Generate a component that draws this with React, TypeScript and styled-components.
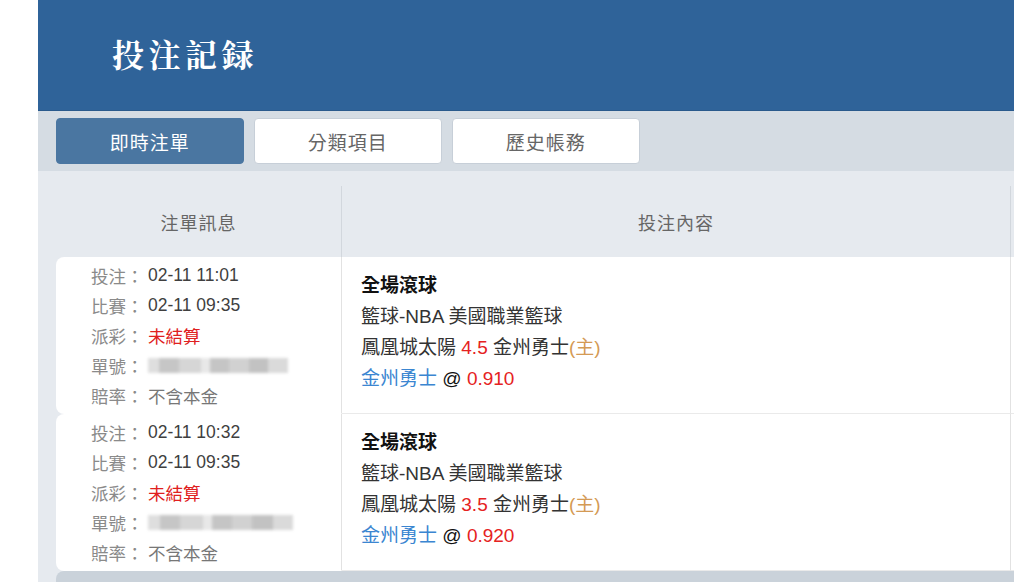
import styled, { createGlobalStyle } from "styled-components";

const GlobalStyle = createGlobalStyle`
  body {
    margin: 0;
    background: #ffffff;
    font-family: "Liberation Sans", "Noto Sans CJK TC", sans-serif;
    overflow: hidden;
  }
`;

const TABS = ["即時注單", "分類項目", "歷史帳務"];

const BETS = [
  {
    placed: "02-11 11:01",
    match: "02-11 09:35",
    line: "4.5",
    odds: "0.910",
    idWidth: 140,
  },
  {
    placed: "02-11 10:32",
    match: "02-11 09:35",
    line: "3.5",
    odds: "0.920",
    idWidth: 145,
  },
];

const App = () => {
  return (
    <>
      <GlobalStyle />
      <Page>
        <Main>
          <Header>
            <Title>投注記録</Title>
          </Header>
          <TabBar>
            {TABS.map((t, i) => (
              <Tab key={t} $active={i === 0}>
                {t}
              </Tab>
            ))}
          </TabBar>
          <TableArea>
            <HeadRow>
              <HeadCell>注單訊息</HeadCell>
              <HeadCell>投注內容</HeadCell>
              <HeadCell />
            </HeadRow>
            {BETS.map((b, i) => (
              <BetRow key={i}>
                <InfoCell>
                  <InfoLine>
                    <Label>投注：</Label>
                    <Value>{b.placed}</Value>
                  </InfoLine>
                  <InfoLine>
                    <Label>比賽：</Label>
                    <Value>{b.match}</Value>
                  </InfoLine>
                  <InfoLine>
                    <Label>派彩：</Label>
                    <Value $red>未結算</Value>
                  </InfoLine>
                  <InfoLine>
                    <Label>單號：</Label>
                    <Redacted style={{ width: b.idWidth }} />
                  </InfoLine>
                  <InfoLine>
                    <Label>賠率：</Label>
                    <Value $light>不含本金</Value>
                  </InfoLine>
                </InfoCell>
                <ContentCell>
                  <BetType>全場滾球</BetType>
                  <ContentLine>籃球-NBA 美國職業籃球</ContentLine>
                  <ContentLine>
                    鳳凰城太陽 <Red>{b.line}</Red> 金州勇士<Home>(主)</Home>
                  </ContentLine>
                  <ContentLine>
                    <Pick>金州勇士</Pick> <At>@</At> <Red>{b.odds}</Red>
                  </ContentLine>
                </ContentCell>
                <ExtraCell />
              </BetRow>
            ))}
            <FooterBar />
          </TableArea>
        </Main>
      </Page>
    </>
  );
};

export default App;

const Page = styled.div`
  width: 1014px;
  height: 582px;
  padding-left: 38px;
  box-sizing: border-box;
  display: flex;
`;

const Main = styled.div`
  flex: 1;
  display: flex;
  flex-direction: column;
  background: #e6eaef;
`;

const Header = styled.div`
  height: 111px;
  background: #2f6399;
  display: flex;
  align-items: center;
  padding-left: 74px;
  box-sizing: border-box;
  border-bottom: 1px solid #2a5a8c;
`;

const Title = styled.h1`
  margin: 0;
  color: #ffffff;
  font-family: "Noto Serif CJK TC", "Noto Sans CJK TC", serif;
  font-size: 32px;
  font-weight: 700;
  letter-spacing: 4.5px;
  padding-bottom: 4px;
`;

const TabBar = styled.div`
  height: 60px;
  background: #d5dce3;
  display: flex;
  align-items: center;
  gap: 10.5px;
  padding-left: 18px;
  box-sizing: border-box;
`;

const Tab = styled.button<{ $active?: boolean }>`
  width: 187.5px;
  height: 46px;
  border-radius: 4px;
  border: 1px solid ${(p) => (p.$active ? "#4a76a1" : "#c7cfd8")};
  background: ${(p) => (p.$active ? "#4a76a1" : "#ffffff")};
  color: ${(p) => (p.$active ? "#ffffff" : "#666666")};
  font-family: "Liberation Sans", "Noto Sans CJK TC", sans-serif;
  font-size: 19px;
  letter-spacing: 1px;
  padding: 0;
  box-sizing: border-box;
`;

const TableArea = styled.div`
  flex: 1;
  display: flex;
  flex-direction: column;
  padding: 15px 0 0 18px;
  box-sizing: border-box;
`;

const HeadRow = styled.div`
  display: grid;
  grid-template-columns: 286px 669px 1fr;
  height: 71px;
`;

const HeadCell = styled.div`
  display: flex;
  align-items: center;
  justify-content: center;
  color: #666666;
  font-size: 18px;
  letter-spacing: 1px;
  border-right: 1px solid #d2d7dd;
  &:last-child {
    border-right: none;
  }
`;

const BetRow = styled.div`
  display: grid;
  grid-template-columns: 286px 669px 1fr;
  height: 157px;
`;

const InfoCell = styled.div`
  background: #ffffff;
  border-radius: 8px 0 0 8px;
  border-right: 1px solid #e2e2e2;
  border-bottom: 1px solid transparent;
  padding-left: 35px;
  display: flex;
  flex-direction: column;
  justify-content: center;
  font-size: 17.5px;
`;

const InfoLine = styled.div`
  height: 30px;
  display: flex;
  align-items: center;
`;

const Label = styled.span`
  color: #8a8a8a;
  width: 57px;
  flex-shrink: 0;
`;

const Value = styled.span<{ $red?: boolean; $light?: boolean }>`
  color: ${(p) => (p.$red ? "#e02020" : p.$light ? "#777777" : "#3f3f3f")};
`;

const Redacted = styled.span`
  display: inline-block;
  height: 15px;
  background:
    linear-gradient(90deg, #d9d9d9 0 8%, #bdbdbd 8% 22%, #cfcfcf 22% 38%, #e4e4e4 38% 44%, #bcbcbc 44% 58%, #c9c9c9 58% 72%, #b8b8b8 72% 86%, #d4d4d4 86% 100%);
  filter: blur(1.5px);
  opacity: 0.85;
`;

const ContentCell = styled.div`
  background: #ffffff;
  border-right: 1px solid #e2e2e2;
  border-bottom: 1px solid #eaeaea;
  padding: 0 0 6px 19px;
  display: flex;
  flex-direction: column;
  justify-content: center;
  font-size: 19px;
  color: #333333;
  box-sizing: border-box;
`;

const ContentLine = styled.div`
  height: 31px;
  line-height: 31px;
  white-space: nowrap;
`;

const BetType = styled(ContentLine)`
  font-weight: 700;
  color: #111111;
`;

const Red = styled.span`
  color: #e52222;
`;

const Home = styled.span`
  color: #d49a55;
`;

const Pick = styled.span`
  color: #3b86d1;
`;

const At = styled.span`
  color: #111111;
`;

const ExtraCell = styled.div`
  background: #ffffff;
  border-bottom: 1px solid #eaeaea;
`;

const FooterBar = styled.div`
  flex: 1;
  background: #cad2da;
  border-radius: 8px 0 0 0;
`;
